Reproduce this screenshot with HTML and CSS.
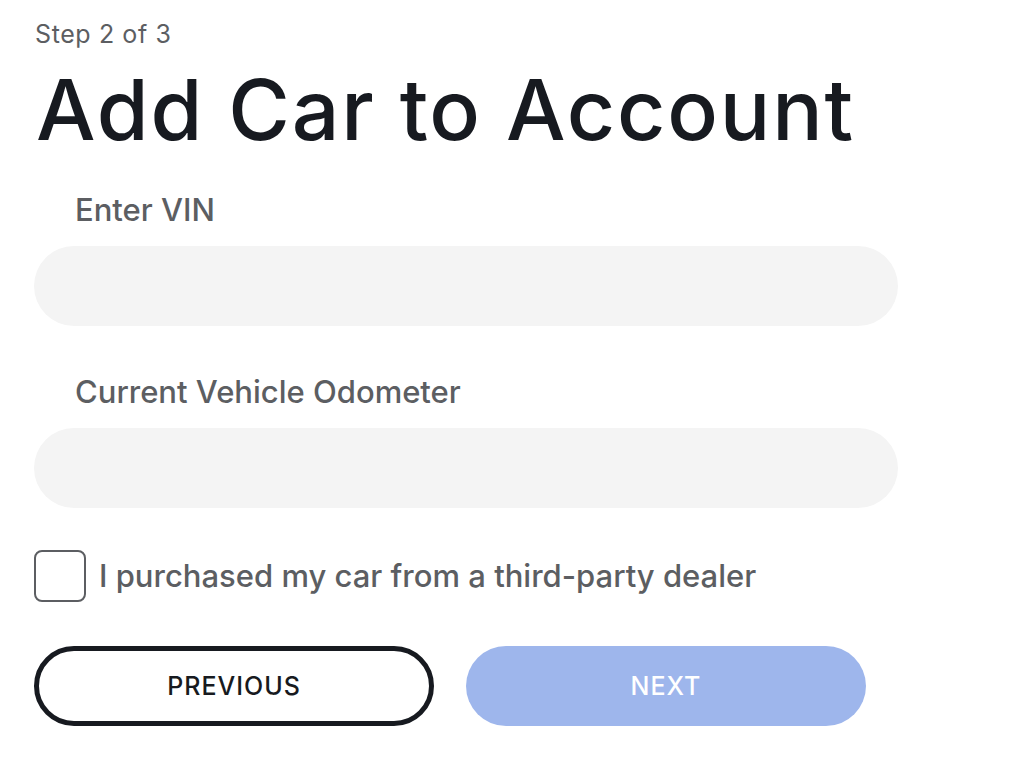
FILE: index.html
```html
<!DOCTYPE html>
<html lang="en">
<head>
<meta charset="utf-8">
<title>Add Car to Account</title>
<link rel="stylesheet" href="styles.css">
</head>
<body>
<main class="page">
  <p class="step">Step 2 of 3</p>
  <h1 class="title">Add Car to Account</h1>
  <form class="form">
    <label class="field">
      <span class="field-label">Enter VIN</span>
      <input class="field-input" type="text">
    </label>
    <label class="field">
      <span class="field-label">Current Vehicle Odometer</span>
      <input class="field-input" type="text">
    </label>
    <label class="check">
      <input class="check-box" type="checkbox">
      <span class="check-text">I purchased my car from a third-party dealer</span>
    </label>
    <div class="actions">
      <button type="button" class="btn btn-outline">PREVIOUS</button>
      <button type="button" class="btn btn-primary">NEXT</button>
    </div>
  </form>
</main>
</body>
</html>
```

FILE: styles.css
```css
* { box-sizing: border-box; }
html, body { margin: 0; padding: 0; background: #fff; }
body {
  font-family: Inter, "Noto Sans", "Liberation Sans", sans-serif;
  color: #171a20;
}
.page {
  padding: 18px 0 0 34px;
  width: 900px;
}
.step {
  margin: 0 0 0 1px;
  font-size: 25px;
  line-height: 32px;
  letter-spacing: 0.6px;
  color: #5c5e62;
}
.title {
  margin: 10px 0 0 2px;
  font-size: 84px;
  line-height: 100px;
  font-weight: 500;
  letter-spacing: 1.8px;
  color: #171a20;
}
.form {
  margin-top: 30px;
  display: flex;
  flex-direction: column;
}
.field {
  display: flex;
  flex-direction: column;
  gap: 16px;
}
.field + .field { margin-top: 46px; }
.field-label {
  padding-left: 41px;
  font-size: 31px;
  line-height: 40px;
  font-weight: 500;
  color: #5c5e62;
}
.field-input {
  width: 864px;
  height: 80px;
  border: 0;
  border-radius: 40px;
  background: #f4f4f4;
  padding: 0 40px;
  font: inherit;
  font-size: 28px;
  outline: none;
}
.check {
  margin-top: 42px;
  display: flex;
  align-items: center;
  gap: 13px;
}
.check-box {
  appearance: none;
  -webkit-appearance: none;
  margin: 0;
  width: 52px;
  height: 52px;
  border: 2px solid #5c5e62;
  border-radius: 8px;
  background: #fff;
}
.check-text {
  font-size: 31px;
  line-height: 40px;
  font-weight: 500;
  color: #5c5e62;
}
.actions {
  margin-top: 44px;
  display: flex;
  gap: 32px;
}
.btn {
  width: 400px;
  height: 80px;
  border-radius: 40px;
  font-family: inherit;
  font-size: 25px;
  font-weight: 500;
  letter-spacing: 1px;
}
.btn-outline {
  background: #fff;
  border: 5px solid #171a20;
  color: #171a20;
}
.btn-primary {
  background: #9eb6ec;
  border: 0;
  color: #fff;
}
```
